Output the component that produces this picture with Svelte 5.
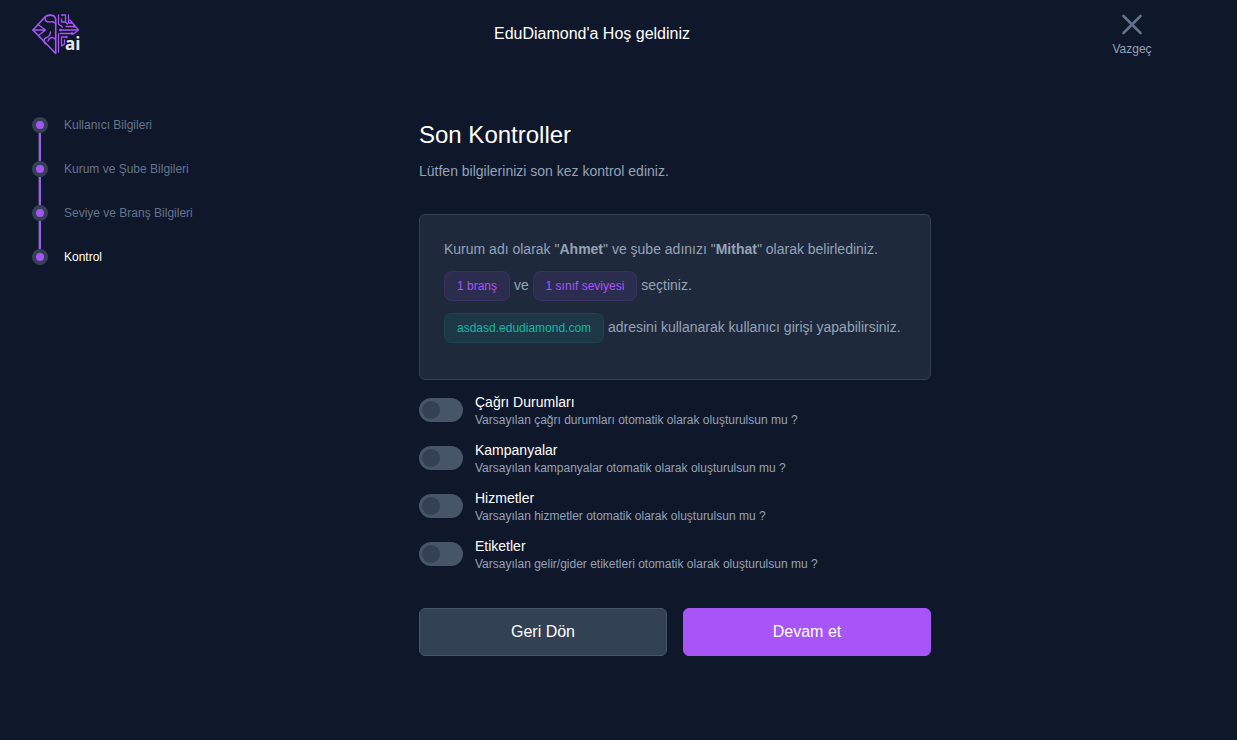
<script>
  const steps = [
    'Kullanıcı Bilgileri',
    'Kurum ve Şube Bilgileri',
    'Seviye ve Branş Bilgileri',
    'Kontrol'
  ];
  let activeStep = 3;

  let options = [
    { id: 'calls', title: 'Çağrı Durumları', text: 'Varsayılan çağrı durumları otomatik olarak oluşturulsun mu ?', checked: false },
    { id: 'campaigns', title: 'Kampanyalar', text: 'Varsayılan kampanyalar otomatik olarak oluşturulsun mu ?', checked: false },
    { id: 'services', title: 'Hizmetler', text: 'Varsayılan hizmetler otomatik olarak oluşturulsun mu ?', checked: false },
    { id: 'tags', title: 'Etiketler', text: 'Varsayılan gelir/gider etiketleri otomatik olarak oluşturulsun mu ?', checked: false }
  ];
</script>

<div class="page">
  <header>
    <a class="logo" href="/" aria-label="EduDiamond">
      <svg width="50" height="44" viewBox="0 0 50 44" fill="none" stroke="#a855f7" stroke-linejoin="round" stroke-linecap="round">
        <!-- brain half -->
        <path d="M23.7 41.5 1 18 12 6C14 3 22 1 23.7 7V41.5" stroke-width="1.6" />
        <path d="M1 18H13.5M6 12.5l7.5 5.5L6.5 23.5M13 6c0 3 2 4 4 4s4-1 6 1M18.5 20c0 4-2 5-5 6-2 1-2 4 0 6M23 27c-3-3-6-1-7 2" stroke-width="1.4" />
        <!-- circuit half -->
        <path d="M26.5 3v9l4 3M29.5 3h4v7h-4V7M33.5 10l2 2M36.5 3v8h4M38 8l8.5 10-5 4M28 18h18M34 14.5h8M28 21.5h13M26.5 22v18M29.5 25v9M29.5 25h5M32.5 28v4l-3 2" stroke-width="1.3" />
        <g fill="#a855f7" stroke="none">
          <circle cx="42" cy="14.5" r="1.3" />
          <circle cx="40" cy="21.5" r="1.3" />
          <circle cx="28.5" cy="18" r="1.3" />
          <circle cx="34.5" cy="25" r="1.2" />
        </g>
        <text x="33" y="38" fill="#e2e8f0" stroke="none" font-size="17" font-weight="700" font-family="Open Sans, sans-serif">ai</text>
      </svg>
    </a>
    <div class="welcome">EduDiamond'a Hoş geldiniz</div>
    <button class="close" type="button">
      <svg width="24" height="24" viewBox="0 0 24 24" fill="none" stroke="currentColor" stroke-width="2.6" stroke-linecap="round">
        <path d="M3.5 4l17 17M20.5 4l-17 17" />
      </svg>
      <span>Vazgeç</span>
    </button>
  </header>

  <div class="content">
    <ol class="steps">
      {#each steps as step, i}
        <li class:active={i === activeStep}>
          <div class="marker">
            <span class="dot"></span>
            {#if i < steps.length - 1}
              <span class="line"></span>
            {/if}
          </div>
          <span class="label">{step}</span>
        </li>
      {/each}
    </ol>

    <main>
      <h1>Son Kontroller</h1>
      <p class="lead">Lütfen bilgilerinizi son kez kontrol ediniz.</p>

      <section class="card">
        <p>Kurum adı olarak "<strong>Ahmet</strong>" ve şube adınızı "<strong>Mithat</strong>" olarak belirlediniz.</p>
        <p><span class="badge purple">1 branş</span> ve <span class="badge purple">1 sınıf seviyesi</span> seçtiniz.</p>
        <p><span class="badge teal">asdasd.edudiamond.com</span> adresini kullanarak kullanıcı girişi yapabilirsiniz.</p>
      </section>

      <div class="options">
        {#each options as option}
          <label class="option" for={option.id}>
            <input id={option.id} type="checkbox" bind:checked={option.checked} />
            <span>
              <span class="title">{option.title}</span>
              <span class="text">{option.text}</span>
            </span>
          </label>
        {/each}
      </div>

      <div class="actions">
        <button class="back" type="button">Geri Dön</button>
        <button class="next" type="button">Devam et</button>
      </div>
    </main>
  </div>
</div>

<style>
  :global(body) {
    margin: 0;
    background: #0f172a;
  }

  .page {
    min-height: 100vh;
    box-sizing: border-box;
    padding: 0 77px 40px 32px;
    font-family: 'Liberation Sans', Arial, sans-serif;
    font-size: 14px;
    line-height: 20px;
    color: #94a3b8;
  }

  header {
    display: flex;
    align-items: center;
    justify-content: space-between;
    height: 67px;
  }

  .logo {
    width: 48px;
    height: 44px;
  }

  .logo svg {
    display: block;
    overflow: visible;
  }

  .welcome {
    font-size: 16px;
    line-height: 24px;
    color: #fff;
  }

  button {
    font-family: inherit;
    cursor: pointer;
  }

  .close {
    display: flex;
    flex-direction: column;
    align-items: center;
    gap: 5px;
    width: 56px;
    padding: 2px 0 0;
    border: 0;
    background: none;
    color: #94a3b8;
    font-size: 12px;
    line-height: 16px;
  }

  .close svg {
    color: #64748b;
  }

  .content {
    display: flex;
    padding-top: 50px;
  }

  .steps {
    flex: none;
    width: 158px;
    margin: 0;
    padding: 0;
    list-style: none;
  }

  .steps li {
    display: flex;
    gap: 16px;
    min-height: 44px;
    font-size: 12px;
    line-height: 16px;
    color: #64748b;
    white-space: nowrap;
  }

  .steps .active {
    color: #fff;
  }

  .marker {
    display: flex;
    flex-direction: column;
    align-items: center;
  }

  .dot {
    box-sizing: border-box;
    width: 16px;
    height: 16px;
    border: 4px solid #334155;
    border-radius: 50%;
    background: #a855f7;
  }

  .line {
    flex: 1;
    width: 2px;
    background: #a855f7;
    box-shadow: -1px 0 #334155;
  }

  main {
    width: 100%;
    max-width: 512px;
    margin: 0 auto;
  }

  h1 {
    margin: 2px 0 10px;
    font-size: 24px;
    font-weight: 400;
    line-height: 32px;
    color: #fff;
  }

  .lead {
    margin: 0 0 33px;
  }

  .card {
    padding: 24px;
    border: 1px solid #334155;
    border-radius: 6px;
    background: #1e293b;
  }

  .card p {
    margin: 0 0 12px;
  }

  .badge {
    display: inline-block;
    padding: 6px 12px;
    border: 1px solid;
    border-radius: 8px;
    font-size: 12px;
    line-height: 16px;
  }

  .purple {
    border-color: rgba(168, 85, 247, 0.1);
    background: rgba(168, 85, 247, 0.1);
    color: #a855f7;
  }

  .teal {
    border-color: rgba(20, 184, 166, 0.1);
    background: rgba(20, 184, 166, 0.1);
    color: #14b8a6;
  }

  .options {
    display: flex;
    flex-direction: column;
    gap: 12px;
    margin: 12px 0 36px;
  }

  .option {
    display: flex;
    align-items: center;
    gap: 12px;
    cursor: pointer;
  }

  .option input {
    appearance: none;
    flex: none;
    width: 44px;
    height: 24px;
    margin: 0;
    padding: 3px;
    box-sizing: border-box;
    border-radius: 12px;
    background: #475569;
    cursor: pointer;
  }

  .option input::before {
    content: '';
    display: block;
    width: 18px;
    height: 18px;
    border-radius: 50%;
    background: #334155;
  }

  .option input:checked {
    background: #a855f7;
  }

  .option input:checked::before {
    margin-left: auto;
    background: #fff;
  }

  .title,
  .text {
    display: block;
  }

  .title {
    color: #fff;
  }

  .text {
    font-size: 12px;
    line-height: 16px;
  }

  .actions {
    display: grid;
    grid-template-columns: 1fr 1fr;
    gap: 16px;
  }

  .actions button {
    height: 48px;
    border: 1px solid #475569;
    border-radius: 6px;
    background: #334155;
    color: #fff;
    font-size: 16px;
  }

  .actions .next {
    border-color: #a855f7;
    background: #a855f7;
  }
</style>
